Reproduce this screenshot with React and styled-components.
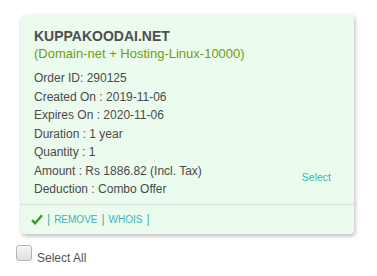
import React from 'react'
import styled, { createGlobalStyle } from 'styled-components'

const Global = createGlobalStyle`
  body {
    margin: 0;
    background: #ffffff;
    font-family: "Liberation Sans", Arial, sans-serif;
  }
`

const Page = styled.div`
  padding: 15px 0 0 16px;
`

const Card = styled.div`
  width: 333px;
  margin-left: 5px;
  background: #ebfbee;
  border-radius: 4px;
  box-shadow: 1px 2px 4px rgba(0,0,0,0.28);
`

const Body = styled.div`
  display: flex;
  justify-content: space-between;
  align-items: flex-end;
  padding: 12px 23px 5px 13px;
  border-bottom: 1px solid #d6dcd7;
`

const Info = styled.div`
  display: flex;
  flex-direction: column;
`

const Title = styled.div`
  font-size: 14px;
  font-weight: bold;
  line-height: 18px;
  color: #4f4f4f;
`

const Sub = styled.div`
  font-size: 13px;
  line-height: 18px;
  color: #6b9e10;
  margin-bottom: 6px;
`

const Line = styled.div`
  font-size: 12px;
  line-height: 18.5px;
  color: #4a4a4a;
`

const Link = styled.a`
  font-size: ${p => p.$size || 10.5}px;
  line-height: 13px;
  color: #3ab3b3;
  text-decoration: none;
  margin-bottom: ${p => p.$mb || 0}px;
`

const Footer = styled.div`
  display: flex;
  align-items: center;
  height: 29px;
  padding-left: 10px;
  color: #3ab3b3;
`

const Sep = styled.span`
  margin: 0 4px;
  font-size: 12px;
`

const SelectAll = styled.label`
  display: flex;
  align-items: flex-start;
  margin-top: 11px;
  font-size: 12px;
  color: #555;
`

const Box = styled.span`
  width: 14px;
  height: 14px;
  border: 1px solid #b5b5b5;
  border-radius: 3px;
  background: linear-gradient(#f6f6f6, #dedede);
  margin-right: 5px;
`

const Text = styled.span`
  margin-top: 6px;
`

const lines = [
  'Order ID: 290125',
  'Created On : 2019-11-06',
  'Expires On : 2020-11-06',
  'Duration : 1 year',
  'Quantity : 1',
  'Amount : Rs 1886.82 (Incl. Tax)',
  'Deduction : Combo Offer',
]

export default function App() {
  return (
    <>
      <Global />
      <Page>
        <Card>
          <Body>
            <Info>
              <Title>KUPPAKOODAI.NET</Title>
              <Sub>(Domain-net + Hosting-Linux-10000)</Sub>
              {lines.map(l => <Line key={l}>{l}</Line>)}
            </Info>
            <Link href="#" $mb={15}>Select</Link>
          </Body>
          <Footer>
            <svg width="12" height="11" viewBox="0 0 12 11">
              <path d="M1 6.2 L4.2 9.2 L11 1.3" fill="none" stroke="#3a9a2a" strokeWidth="2.4" />
            </svg>
            <Sep>|</Sep>
            <Link href="#" $size={10}>REMOVE</Link>
            <Sep>|</Sep>
            <Link href="#" $size={10}>WHOIS</Link>
            <Sep>|</Sep>
          </Footer>
        </Card>
        <SelectAll>
          <Box />
          <Text>Select All</Text>
        </SelectAll>
      </Page>
    </>
  )
}
